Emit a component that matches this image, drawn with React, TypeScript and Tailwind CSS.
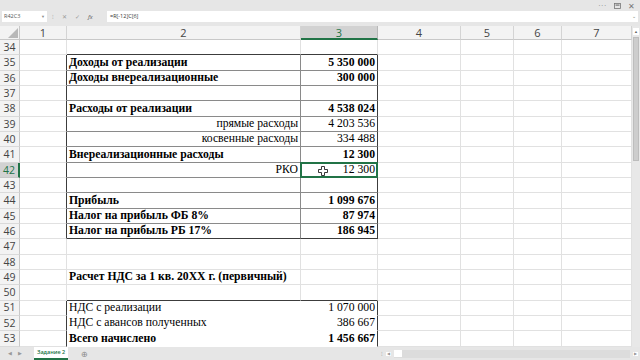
import React from 'react';

type Cell = {
  text?: string;
  bold?: boolean;
  align?: 'left' | 'right';
  right?: string;
  bottom?: string;
};

const DARK = 'border-r-[#3c3c3c]';
const DARK_B = 'border-b-[#3c3c3c]';
const INNER = 'border-r-[#8a8a8a]';
const INNER_B = 'border-b-[#8a8a8a]';
const NONE = 'border-r-white';
const NONE_B = 'border-b-white';

const COLS = [47, 234, 77, 83, 53, 48, 70];

type Row = { n: number; c2?: Cell; c3?: Cell };

// rows of the sheet, 34 to 53
const rows: Row[] = [
  { n: 34, c2: { bottom: DARK_B }, c3: { bottom: DARK_B } },
  { n: 35, c2: { text: 'Доходы от реализации', bold: true }, c3: { text: '5 350 000', bold: true, align: 'right' } },
  { n: 36, c2: { text: 'Доходы внереализационные', bold: true }, c3: { text: '300 000', bold: true, align: 'right' } },
  { n: 37, c2: {}, c3: {} },
  { n: 38, c2: { text: 'Расходы от реализации', bold: true }, c3: { text: '4 538 024', bold: true, align: 'right' } },
  { n: 39, c2: { text: 'прямые расходы', align: 'right' }, c3: { text: '4 203 536', align: 'right' } },
  { n: 40, c2: { text: 'косвенные расходы', align: 'right' }, c3: { text: '334 488', align: 'right' } },
  { n: 41, c2: { text: 'Внереализационные расходы', bold: true }, c3: { text: '12 300', bold: true, align: 'right' } },
  { n: 42, c2: { text: 'РКО', align: 'right' }, c3: { text: '12 300', align: 'right' } },
  { n: 43, c2: {}, c3: {} },
  { n: 44, c2: { text: 'Прибыль', bold: true }, c3: { text: '1 099 676', bold: true, align: 'right' } },
  { n: 45, c2: { text: 'Налог на прибыль ФБ 8%', bold: true }, c3: { text: '87 974', bold: true, align: 'right' } },
  { n: 46, c2: { text: 'Налог на прибыль РБ 17%', bold: true, bottom: DARK_B }, c3: { text: '186 945', bold: true, align: 'right', bottom: DARK_B } },
  { n: 47 },
  { n: 48 },
  { n: 49, c2: { text: 'Расчет НДС за 1 кв. 20XX г. (первичный)', bold: true } },
  { n: 50, c2: { bottom: DARK_B }, c3: { bottom: DARK_B } },
  { n: 51, c2: { text: 'НДС с реализации', right: NONE, bottom: NONE_B }, c3: { text: '1 070 000', align: 'right', right: DARK, bottom: NONE_B } },
  { n: 52, c2: { text: 'НДС с авансов полученных', right: NONE, bottom: NONE_B }, c3: { text: '386 667', align: 'right', right: DARK, bottom: NONE_B } },
  { n: 53, c2: { text: 'Всего начислено', bold: true, right: NONE, bottom: NONE_B }, c3: { text: '1 456 667', bold: true, align: 'right', right: DARK, bottom: NONE_B } },
];

function inTable1(n: number) {
  return n >= 35 && n <= 46;
}
function inTable2(n: number) {
  return n >= 51 && n <= 53;
}

function CrossCursor() {
  return (
    <svg width="10" height="10" viewBox="0 0 10 10" className="absolute left-[17px] top-[3px]">
      <path d="M3.5 0.5h3v3h3v3h-3v3h-3v-3h-3v-3h3z" fill="white" stroke="#222" strokeWidth="0.9" />
    </svg>
  );
}

function SheetRow({ row }: { row: Row }) {
  const t1 = inTable1(row.n);
  const t2 = inTable2(row.n);
  const selected = row.n === 42;
  const c1Right = t1 || t2 ? DARK : 'border-r-[#e1e1e1]';
  const c2 = row.c2 ?? {};
  const c3 = row.c3 ?? {};
  const c2Right = c2.right ?? (t1 ? INNER : 'border-r-[#e1e1e1]');
  const c3Right = c3.right ?? (t1 ? DARK : 'border-r-[#e1e1e1]');
  const c2Bottom = c2.bottom ?? (t1 ? INNER_B : 'border-b-[#e1e1e1]');
  const c3Bottom = c3.bottom ?? (t1 ? INNER_B : 'border-b-[#e1e1e1]');
  const cellBase =
    'h-[15.33px] border-r border-b flex items-center overflow-visible whitespace-nowrap text-[11.7px] leading-none text-black';

  return (
    <>
      <div
        className={
          'h-[15.33px] flex items-center justify-center border-b text-[10.5px] leading-none ' +
          (selected
            ? 'bg-[#d2d2d2] text-[#217346] border-b-[#c6c6c6] border-r-2 border-r-[#217346]'
            : 'bg-[#f3f3f3] text-[#444] border-b-[#dadada] border-r border-r-[#c8c8c8]')
        }
        style={{ fontFamily: '"Open Sans", "Liberation Sans", sans-serif' }}
      >
        {row.n}
      </div>
      <div className={cellBase + ' border-b-[#e1e1e1] ' + c1Right} />
      <div
        className={
          cellBase + ' px-[2px] ' + c2Right + ' ' + c2Bottom + ' ' +
          (c2.align === 'right' ? 'justify-end ' : 'justify-start ') +
          (c2.bold ? 'font-bold' : '')
        }
      >
        {c2.text}
      </div>
      <div
        className={
          cellBase + ' relative px-[2px] ' + c3Right + ' ' + c3Bottom + ' ' +
          (c3.align === 'right' ? 'justify-end ' : 'justify-start ') +
          (c3.bold ? 'font-bold' : '')
        }
      >
        {c3.text}
        {selected && (
          <>
            <div className="absolute -left-[1px] -top-[1px] w-[78px] h-[16.5px] border-2 border-[#217346]" />
            <CrossCursor />
          </>
        )}
      </div>
      {COLS.slice(3).map((w, i) => (
        <div key={i} className="h-[15.33px] border-r border-b border-r-[#e1e1e1] border-b-[#e1e1e1]" />
      ))}
    </>
  );
}

export default function App() {
  const headFont = { fontFamily: '"Open Sans", "Liberation Sans", sans-serif' };
  return (
    <div
      className="w-[640px] h-[360px] overflow-hidden bg-[#e6e6e6] flex flex-col"
      style={{ fontFamily: '"Liberation Serif", "Times New Roman", serif' }}
    >
      {/* window strip */}
      <div className="h-[11px] flex items-center justify-end gap-[7px] pr-[5px] text-[#777]" style={headFont}>
        <span className="text-[7px] leading-none tracking-[1px]">···</span>
        <svg width="7" height="6" viewBox="0 0 7 6">
          <rect x="0.5" y="0.5" width="6" height="5" fill="none" stroke="#777" strokeWidth="0.8" />
          <rect x="1.5" y="1.5" width="4" height="1.2" fill="#777" />
        </svg>
        <span className="text-[8px] leading-none">✕</span>
      </div>

      {/* formula bar */}
      <div className="h-[11px] flex items-stretch gap-[3px] pl-[2px] pr-[2px] text-[5.5px] leading-none" style={headFont}>
        <div className="w-[45px] bg-white flex items-center justify-between px-[2px] text-[#555]">
          <span>R42C3</span>
          <span className="text-[4px] text-[#888]">▼</span>
        </div>
        <div className="w-[54px] flex items-center gap-[8px] pl-[2px] text-[#9a9a9a]">
          <span className="text-[6px]">⁝</span>
          <span className="text-[6px]">✕</span>
          <span className="text-[6px]">✓</span>
          <span className="italic text-[6px] text-[#555]">fx</span>
        </div>
        <div className="flex-1 bg-white flex items-center justify-between pl-[3px] pr-[2px] text-[#333]">
          <span>=R[-12]C[6]</span>
          <span className="text-[5px] text-[#777]">⌄</span>
        </div>
      </div>
      <div className="h-[4px]" />

      {/* sheet */}
      <div className="flex-1 flex min-h-0">
        <div className="flex-1 bg-white overflow-hidden">
          <div className="grid grid-cols-[20px_47px_234px_77px_83px_53px_48px_70px]">
            {/* header row */}
            <div className="h-[14px] bg-[#f3f3f3] border-r border-b border-r-[#c8c8c8] border-b-[#c8c8c8] relative">
              <svg width="10" height="10" viewBox="0 0 10 10" className="absolute right-[1px] bottom-[1px]">
                <path d="M10 0 L10 10 L0 10 Z" fill="#b8b8b8" />
              </svg>
            </div>
            {COLS.map((w, i) => (
              <div
                key={i}
                className={
                  'h-[14px] flex items-center justify-center text-[11px] leading-none border-r ' +
                  (i === 2
                    ? 'bg-[#d2d2d2] text-[#217346] border-r-[#b8b8b8] border-b-2 border-b-[#217346]'
                    : 'bg-[#f3f3f3] text-[#444] border-r-[#d4d4d4] border-b border-b-[#c8c8c8]')
                }
                style={headFont}
              >
                {i + 1}
              </div>
            ))}
            {rows.map((r) => (
              <SheetRow key={r.n} row={r} />
            ))}
          </div>
        </div>
        {/* vertical scrollbar */}
        <div className="w-[8px] bg-[#e8e8e8] flex flex-col items-center pt-[2px]">
          <div className="w-[6px] h-[7px] bg-white flex items-center justify-center text-[4px] text-[#666]">▲</div>
          <div className="w-[6px] h-[124px] mt-[2px] bg-[#cdcdcd] border border-[#bdbdbd]" />
        </div>
      </div>

      {/* sheet tabs */}
      <div className="h-[13px] flex items-center text-[5.5px] leading-none text-[#999]" style={headFont}>
        <span className="ml-[8px] text-[5px]">◀</span>
        <span className="ml-[6px] text-[5px]">▶</span>
        <div className="ml-[12px] h-full px-[3px] bg-white flex items-center border-b-2 border-b-[#217346] text-[#217346] font-semibold">
          Задание 2
        </div>
        <span className="ml-[13px] text-[8px] text-[#888]">⊕</span>
        <div className="ml-auto flex items-center gap-[3px] mr-[2px]">
          <span className="text-[6px]">⁝</span>
          <span className="text-[4px] bg-white px-[1px]">◀</span>
          <div className="w-[236px] h-[8px] bg-[#dcdcdc] flex items-center">
            <div className="w-[8px] h-[7px] bg-white" />
          </div>
          <span className="text-[4px] bg-white px-[1px]">▶</span>
        </div>
      </div>
    </div>
  );
}
